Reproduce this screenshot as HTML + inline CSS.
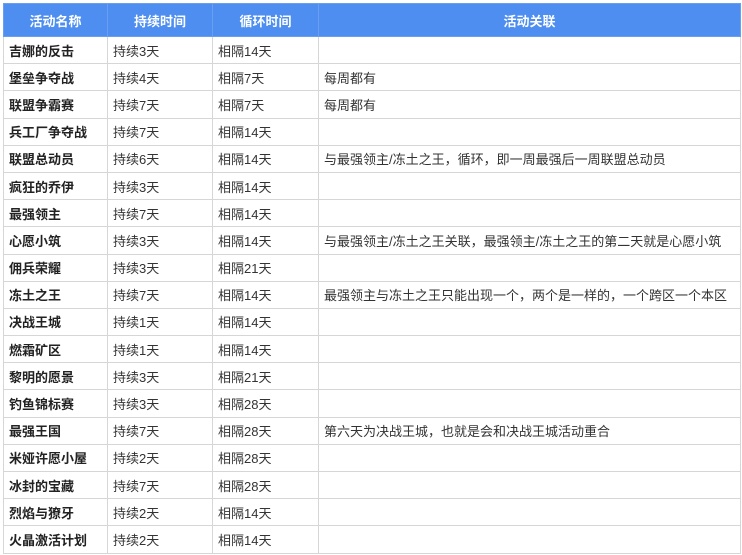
<html><head><style>
body{margin:0;background:#fff;font-family:"Liberation Sans","Noto Sans CJK SC",sans-serif;}
table{position:absolute;left:3px;top:3px;border-collapse:collapse;table-layout:fixed;width:738px;}
td,th{border:1px solid #d6d6d6;height:27.2px;padding:0 0 0 5px;font-size:13px;color:#333;white-space:nowrap;overflow:hidden;}
th{background:#4d8ef0;color:#fff;height:33px;text-align:center;font-weight:bold;padding:0;border-color:#6a9ff0;font-size:13px}
td:first-child{font-weight:bold;color:#222}
</style></head><body>
<table>
<colgroup><col style="width:104px"><col style="width:105px"><col style="width:106px"><col></colgroup>
<tr><th>活动名称</th><th>持续时间</th><th>循环时间</th><th>活动关联</th></tr>
<tr><td>吉娜的反击</td><td>持续3天</td><td>相隔14天</td><td></td></tr>
<tr><td>堡垒争夺战</td><td>持续4天</td><td>相隔7天</td><td>每周都有</td></tr>
<tr><td>联盟争霸赛</td><td>持续7天</td><td>相隔7天</td><td>每周都有</td></tr>
<tr><td>兵工厂争夺战</td><td>持续7天</td><td>相隔14天</td><td></td></tr>
<tr><td>联盟总动员</td><td>持续6天</td><td>相隔14天</td><td>与最强领主/冻土之王，循环，即一周最强后一周联盟总动员</td></tr>
<tr><td>疯狂的乔伊</td><td>持续3天</td><td>相隔14天</td><td></td></tr>
<tr><td>最强领主</td><td>持续7天</td><td>相隔14天</td><td></td></tr>
<tr><td>心愿小筑</td><td>持续3天</td><td>相隔14天</td><td>与最强领主/冻土之王关联，最强领主/冻土之王的第二天就是心愿小筑</td></tr>
<tr><td>佣兵荣耀</td><td>持续3天</td><td>相隔21天</td><td></td></tr>
<tr><td>冻土之王</td><td>持续7天</td><td>相隔14天</td><td>最强领主与冻土之王只能出现一个，两个是一样的，一个跨区一个本区</td></tr>
<tr><td>决战王城</td><td>持续1天</td><td>相隔14天</td><td></td></tr>
<tr><td>燃霜矿区</td><td>持续1天</td><td>相隔14天</td><td></td></tr>
<tr><td>黎明的愿景</td><td>持续3天</td><td>相隔21天</td><td></td></tr>
<tr><td>钓鱼锦标赛</td><td>持续3天</td><td>相隔28天</td><td></td></tr>
<tr><td>最强王国</td><td>持续7天</td><td>相隔28天</td><td>第六天为决战王城，也就是会和决战王城活动重合</td></tr>
<tr><td>米娅许愿小屋</td><td>持续2天</td><td>相隔28天</td><td></td></tr>
<tr><td>冰封的宝藏</td><td>持续7天</td><td>相隔28天</td><td></td></tr>
<tr><td>烈焰与獠牙</td><td>持续2天</td><td>相隔14天</td><td></td></tr>
<tr><td>火晶激活计划</td><td>持续2天</td><td>相隔14天</td><td></td></tr>
</table>
</body></html>
